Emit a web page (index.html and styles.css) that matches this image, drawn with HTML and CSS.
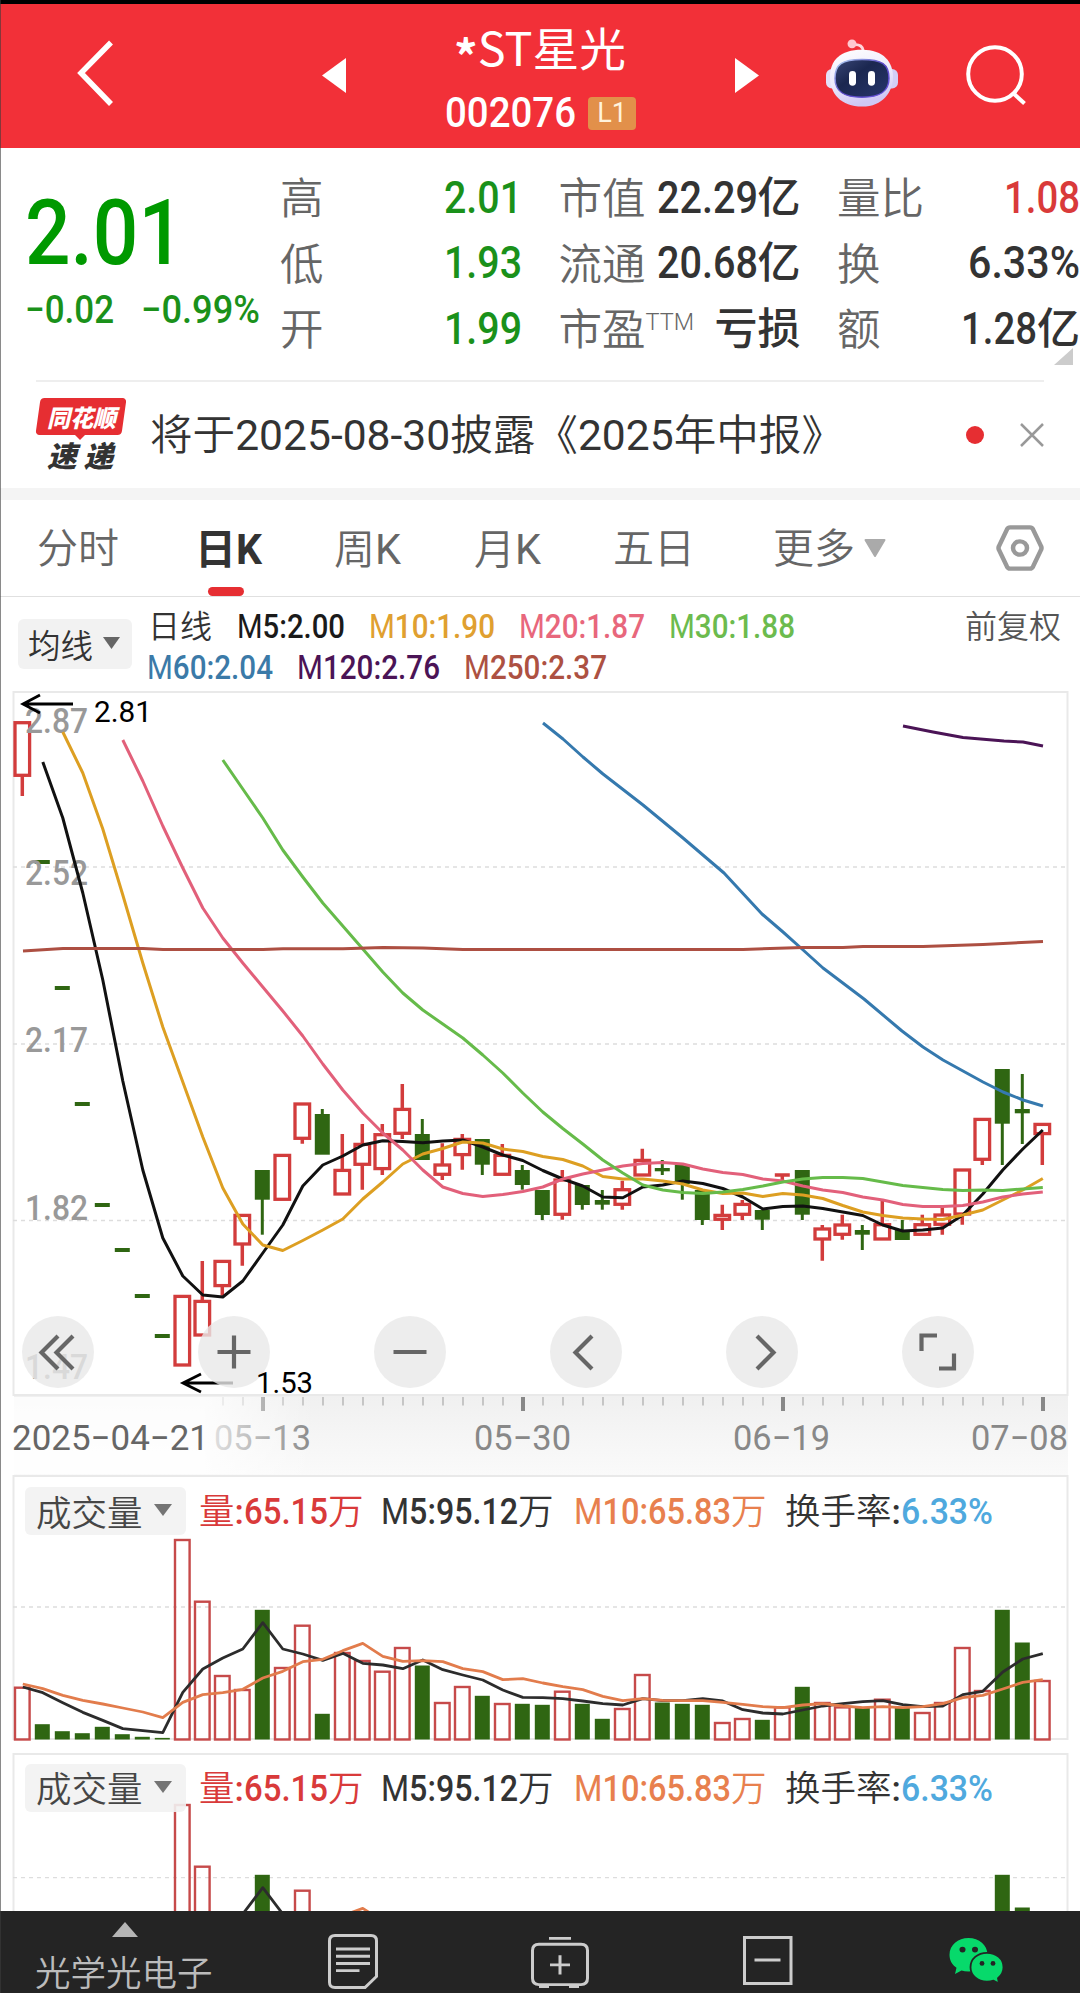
FILE: index.html
```html
<!DOCTYPE html>
<html lang="zh-CN">
<head>
<meta charset="utf-8">
<title>*ST星光 002076</title>
<link rel="stylesheet" href="styles.css">
</head>
<body>
<div class="app">
  <header class="topbar">
    <svg class="back" width="40" height="68" viewBox="0 0 40 68"><path d="M35 3.500 5 34 35 65" fill="none" stroke="#fff" stroke-width="5.500"/></svg>
    <svg class="prev" width="24" height="35" viewBox="0 0 24 35"><path d="M24 0v35L0 17.500z" fill="#fff"/></svg>
    <div class="title">
      <div class="name"><span class="fit" data-w="172"><span class="star">*</span>ST星光</span></div>
      <div class="code"><span class="fit" data-w="131">002076</span><span class="badge">L1</span></div>
    </div>
    <svg class="next" width="24" height="35" viewBox="0 0 24 35"><path d="M0 0v35l24-17.500z" fill="#fff"/></svg>
    <svg class="robot" width="74" height="68" viewBox="0 0 74 70" preserveAspectRatio="none">
      <defs>
        <linearGradient id="shell" x1="0" y1="0" x2=".3" y2="1"><stop offset="0" stop-color="#fff"/><stop offset=".6" stop-color="#ece9fb"/><stop offset="1" stop-color="#cfc8f5"/></linearGradient>
        <linearGradient id="visor" x1="0" y1="0" x2="1" y2="1"><stop offset="0" stop-color="#3a4776"/><stop offset=".4" stop-color="#1b2750"/><stop offset="1" stop-color="#27366c"/></linearGradient>
        <linearGradient id="rim" x1="0" y1="0" x2="1" y2="1"><stop offset="0" stop-color="#b9dcf6"/><stop offset=".5" stop-color="#5a49c8"/><stop offset="1" stop-color="#6b55dd"/></linearGradient>
      </defs>
      <path d="M28 6c7-1 10 2 10.500 7" fill="none" stroke="#ffd5dc" stroke-width="3"/>
      <circle cx="27" cy="5" r="4.500" fill="#ffc9d0"/>
      <rect x="1" y="31" width="14" height="20" rx="6" fill="#e4e0f8"/>
      <rect x="59" y="31" width="14" height="20" rx="6" fill="#d3cff6"/>
      <path d="M37 11c22 0 31 13 31 28S58 69.500 37 69.500 5 56 5 39s10-28 32-28z" fill="url(#shell)"/>
      <path d="M37 21c20 0 27 5 27 19.500S54 60 37 60 10 55 10 40.500 17 21 37 21z" fill="url(#visor)" stroke="url(#rim)" stroke-width="1.500"/>
      <rect x="24" y="33" width="7" height="15" rx="3.500" fill="#fff"/>
      <rect x="43" y="33" width="7" height="15" rx="3.500" fill="#fff"/>
    </svg>
    <svg class="search" width="62" height="62" viewBox="0 0 62 62"><circle cx="29" cy="30" r="26.800" fill="none" stroke="#fff" stroke-width="4"/><path d="m47 49 11.500 10.500" stroke="#fff" stroke-width="4"/></svg>
  </header>

  <section class="quote">
    <div class="last">
      <div class="price"><span class="fit" data-w="159">2.01</span></div>
      <div class="change"><span class="fit" data-w="89">−0.02</span><span class="fit" data-w="119">−0.99%</span></div>
    </div>
    <dl class="stats">
      <div><dt>高</dt><dd class="down"><span class="fit" data-w="78">2.01</span></dd></div>
      <div><dt>市值</dt><dd><span class="fit" data-w="101">22.29</span>亿</dd></div>
      <div><dt>量比</dt><dd class="up"><span class="fit" data-w="76">1.08</span></dd></div>
      <div><dt>低</dt><dd class="down"><span class="fit" data-w="78">1.93</span></dd></div>
      <div><dt>流通</dt><dd><span class="fit" data-w="101">20.68</span>亿</dd></div>
      <div><dt>换</dt><dd><span class="fit" data-w="112">6.33%</span></dd></div>
      <div><dt>开</dt><dd class="down"><span class="fit" data-w="78">1.99</span></dd></div>
      <div><dt>市盈<sup>TTM</sup></dt><dd>亏损</dd></div>
      <div><dt>额</dt><dd><span class="fit" data-w="76">1.28</span>亿</dd></div>
    </dl>
    <svg class="corner" width="19" height="17" viewBox="0 0 19 17"><path d="M19 0v17H0z" fill="#ccc"/></svg>
  </section>

  <section class="news">
    <div class="brand">
      <div class="bubble"><span class="fit" data-w="69">同花顺</span></div>
      <div class="express"><span class="fit" data-w="66">速 递</span></div>
    </div>
    <p><span class="fit" data-w="694">将于<em>2025-08-30</em>披露《<em>2025</em>年中报》</span></p>
    <i class="dot"></i>
    <svg class="close" width="24" height="24" viewBox="0 0 24 24"><path d="m1 1 22 22M23 1l-22 22" stroke="#999" stroke-width="2.500"/></svg>
  </section>

  <nav class="tabs">
    <span class="t1">分时</span>
    <span class="t2 active">日<b class="fit" data-w="26">K</b></span>
    <span class="t3">周<span class="fit" data-w="26">K</span></span>
    <span class="t4">月<span class="fit" data-w="26">K</span></span>
    <span class="t5">五日</span>
    <span class="t6">更多</span>
    <svg class="more" width="22" height="19" viewBox="0 0 22 19"><path d="M1.500 1h19L11 17z" fill="#aaa" stroke="#aaa" stroke-linejoin="round" stroke-width="2"/></svg>
    <svg class="gear" width="48" height="46" viewBox="0 0 48 48" preserveAspectRatio="none"><path d="M14 2.500h20q2 0 3 2L45 22q1 2 0 4L37 43.500q-1 2-3 2H14q-2 0-3-2L3 26q-1-2 0-4L11 4.500q1-2 3-2z" fill="none" stroke="#999" stroke-width="4.500"/><circle cx="24" cy="24" r="7" fill="none" stroke="#999" stroke-width="4.500"/></svg>
  </nav>

  <section class="averages">
    <button class="pill">均线<svg width="17" height="12" viewBox="0 0 17 12"><path d="M0 0h17L8.500 12z" fill="#666"/></svg></button>
    <div class="legend">
      <div class="line">
        <span class="cycle">日线</span>
        <span class="fit m5" data-w="108"><em>M</em>5:2.00</span>
        <span class="fit m10" data-w="126"><em>M</em>10:1.90</span>
        <span class="fit m20" data-w="126"><em>M</em>20:1.87</span>
        <span class="fit m30" data-w="126"><em>M</em>30:1.88</span>
      </div>
      <div class="line">
        <span class="fit m60" data-w="126"><em>M</em>60:2.04</span>
        <span class="fit m120" data-w="143"><em>M</em>120:2.76</span>
        <span class="fit m250" data-w="143"><em>M</em>250:2.37</span>
      </div>
    </div>
    <span class="adjust">前复权</span>
  </section>

  <section class="candles">
    <svg id="price" width="1080" height="784" viewBox="0 691 1080 784"></svg>
    <div class="tools">
      <button><svg viewBox="0 0 72 72"><path d="M36 20 19.500 36.500 36 53M51 20 34.500 36.500 51 53"/></svg></button>
      <button><svg viewBox="0 0 72 72"><path d="M36 19.500v33M19.500 36h33"/></svg></button>
      <button><svg viewBox="0 0 72 72"><path d="M19.500 36h33"/></svg></button>
      <button><svg viewBox="0 0 72 72"><path d="M42 20 25.500 36.500 42 53"/></svg></button>
      <button><svg viewBox="0 0 72 72"><path d="m31 20 16.500 16.500L31 53"/></svg></button>
      <button><svg viewBox="0 0 72 72"><path d="M19.500 35V19.500h15.500M52 37.500v15H37"/></svg></button>
    </div>
  </section>

  <section class="volume">
    <svg class="plot" width="1080" height="278" viewBox="0 1475 1080 278"></svg>
    <div class="caption">
      <button class="pill">成交量<svg width="18" height="12" viewBox="0 0 18 12"><path d="M0 0h18L9 12z" fill="#666"/></svg></button>
      <span class="v0">量<b>:</b><span class="fit" data-w="84">65.15</span>万</span>
      <span class="v5"><span class="fit" data-w="137"><em>M</em>5:95.12</span>万</span>
      <span class="v10"><span class="fit" data-w="157"><em>M</em>10:65.83</span>万</span>
      <span class="vt">换手率<b>:</b><span class="fit rate" data-w="92">6.33%</span></span>
    </div>
  </section>

  <section class="volume second">
    <svg class="plot" width="1080" height="158" viewBox="0 1753 1080 158"></svg>
    <div class="caption">
      <button class="pill">成交量<svg width="18" height="12" viewBox="0 0 18 12"><path d="M0 0h18L9 12z" fill="#666"/></svg></button>
      <span class="v0">量<b>:</b><span class="fit" data-w="84">65.15</span>万</span>
      <span class="v5"><span class="fit" data-w="137"><em>M</em>5:95.12</span>万</span>
      <span class="v10"><span class="fit" data-w="157"><em>M</em>10:65.83</span>万</span>
      <span class="vt">换手率<b>:</b><span class="fit rate" data-w="92">6.33%</span></span>
    </div>
  </section>

  <footer class="dock">
    <div class="sector">
      <svg width="26" height="15" viewBox="0 0 26 15"><path d="M13 0l13 15H0z" fill="#b5b5b5"/></svg>
      <span>光学光电子</span>
    </div>
    <svg class="doc" width="50" height="55" viewBox="0 0 50 57" preserveAspectRatio="none" fill="none" stroke="#ccc" stroke-width="3"><path d="M7 1.500h36q5.500 0 5.500 5.500v37L37 55.500H7q-5.500 0-5.500-5.500V7Q1.500 1.500 7 1.500z"/><path d="M8 15.500h34M8 23h34M8 30.500h34M8 38h23.500"/></svg>
    <svg class="case" width="58" height="52" viewBox="0 0 58 54" preserveAspectRatio="none" fill="none" stroke="#ccc" stroke-width="3"><path d="M18 2.500h22M8 8.500h42q6.500 0 6.500 6.500v29q0 6.500-6.500 6.500H8q-6.500 0-6.500-6.500V15q0-6.500 6.500-6.500zM29 20v20M19 30h20M8 52.500h10M38 52.500h10"/></svg>
    <svg class="minus" width="50" height="49" viewBox="0 0 50 49" fill="none" stroke="#ccc" stroke-width="3"><path d="M1.500 1.500h46.500v46H1.500zM11.500 24h26"/></svg>
    <svg class="wechat" width="55" height="46" viewBox="0 0 55 48" preserveAspectRatio="none">
      <path d="M19.500 0C30 0 38.500 7.500 38.500 17.500S30 35 19.500 35q-4 0-7-1L6 37.500l1.500-6.500C3 28 .5 23.500.5 17.500.500 7.500 9 0 19.500 0z" fill="#07d96b"/>
      <path d="M38 15.500c9.500 0 16.500 6.500 16.500 15 0 5-2 8.500-5.500 11.500l1 5.500-5.500-3q-3 1-6.500 1c-9.500 0-16.500-6.500-16.500-15s7-15 16.500-15z" fill="#07d96b" stroke="#242424" stroke-width="1.800"/>
      <circle cx="13.500" cy="12" r="3"/><circle cx="26" cy="12" r="3"/><circle cx="33" cy="26.500" r="2.400"/><circle cx="44" cy="26.500" r="2.400"/>
    </svg>
  </footer>
</div>
<script src="chart.js"></script>
</body>
</html>
```
FILE: styles.css
```css
* { box-sizing: border-box; }
body {
  margin: 0;
  background: #fff;
  color: #333;
  font-family: Roboto, "Noto Sans CJK SC", sans-serif;
}
button { border: 0; padding: 0; margin: 0; font: inherit; color: inherit; }
em { font-style: normal; font-weight: 400; }
svg { display: block; flex: none; }
.fit { display: inline-block; white-space: nowrap; transform-origin: 0 50%; }
.app {
  position: relative;
  width: 1080px;
  height: 1993px;
  overflow: hidden;
}
.app::before {
  content: "";
  position: absolute;
  z-index: 5;
  inset: 0 auto 0 0;
  width: 1px;
  background: rgba(60, 60, 60, .6);
}

/* header */
.topbar {
  display: flex;
  align-items: flex-start;
  height: 148px;
  border-top: 4px solid #000;
  background: #f23038;
  color: #fff;
}
.back { margin: 35px 0 0 76px; }
.prev { margin: 54px 0 0 206px; }
.title { margin-left: 99px; width: 195px; }
.name {
  height: 84px;
  margin-left: 9px;
  font: 400 46px/84px "Noto Sans CJK SC", sans-serif;
}
.star { font-weight: 700; line-height: 0; vertical-align: -8px; }
.code {
  display: flex;
  align-items: center;
  gap: 12px;
  height: 54px;
  margin-top: -2px;
  font-size: 42.500px;
  font-weight: 500;
  line-height: 54px;
}
.badge {
  width: 48px;
  height: 33px;
  border-radius: 4px;
  background: #e2904a;
  color: #fff3dc;
  font-size: 27px;
  font-weight: 400;
  line-height: 33px;
  text-align: center;
}
.next { margin: 54px 0 0 95px; }
.robot { margin: 35px 0 0 66px; }
.search { margin: 40px 0 0 67px; }

/* quote */
.quote {
  position: relative;
  display: flex;
  height: 232px;
}
.last { width: 281px; padding-left: 25px; color: #090; }
.price {
  height: 110px;
  margin-top: 31px;
  font-size: 90px;
  font-weight: 500;
  line-height: 110px;
}
.change {
  display: flex;
  gap: 27px;
  height: 48px;
  margin-top: -3px;
  color: #1a911a;
  font-size: 38.500px;
  font-weight: 500;
  line-height: 48px;
}
.stats {
  display: grid;
  grid-template-columns: 242px 242px 243px;
  grid-template-rows: repeat(3, 65.500px);
  column-gap: 36.500px;
  margin: 15px 0 0 -1px;
  line-height: 65.500px;
}
.stats div { display: flex; justify-content: space-between; white-space: nowrap; }
.stats dt {
  color: #666;
  font-family: "Noto Sans CJK SC", sans-serif;
  font-size: 43.500px;
  font-weight: 350;
}
.stats dd {
  display: flex;
  margin: 2.500px 0 0;
  font-size: 43px;
  font-weight: 500;
}
.stats dd .fit { font-size: 43.500px; }
.stats .down { color: #1a911a; }
.stats .up { color: #d93a3a; }
.stats sup {
  font-family: Roboto, sans-serif;
  font-size: 23.500px;
  line-height: 0;
  vertical-align: 15px;
}
.corner { position: absolute; right: 7px; top: 200px; }

/* news */
.news {
  display: flex;
  align-items: center;
  height: 108px;
  margin: 0 36px;
  border-top: 2px solid #eee;
}
.brand { width: 90px; margin-top: -2px; font-family: "Noto Sans CJK SC", sans-serif; font-weight: 900; }
.bubble {
  position: relative;
  height: 37px;
  color: #fff;
  font-size: 24px;
  line-height: 37px;
  text-align: center;
}
.bubble::before {
  content: "";
  position: absolute;
  inset: 0 2px;
  border-radius: 4px;
  background: #e62e32;
  transform: skewX(-8deg);
}
.bubble::after {
  content: "";
  position: absolute;
  left: 38px;
  top: 36px;
  border: 6px solid transparent;
  border-top-color: #e62e32;
  border-bottom: 0;
}
.bubble .fit { position: relative; font-style: italic; }
.express {
  height: 36px;
  padding-left: 11px;
  font-size: 29px;
  font-style: italic;
  line-height: 38px;
}
.news p { margin: 1px 0 0 24px; font-size: 42px; line-height: 60px; font-weight: 350; }
.dot { width: 18px; height: 18px; margin-left: auto; border-radius: 50%; background: #e62e32; }
.close { margin-left: 36px; }

/* tabs */
.tabs {
  display: flex;
  height: 109px;
  border-top: 12px solid #f4f4f4;
  border-bottom: 1px solid #e0e0e0;
  color: #666;
  font-size: 41px;
  font-weight: 350;
  line-height: 99px;
  white-space: nowrap;
}
.tabs .fit { font-size: 42px; font-weight: 400; }
.t1 { width: 158px; margin-left: 37px; }
.t2 { position: relative; width: 139px; }
.t3 { width: 140px; }
.t4 { width: 139px; }
.t5 { width: 160px; }
.t6 { width: 91px; }
.tabs .active, .tabs .active .fit { color: #333; font-weight: 700; }
.active::after {
  content: "";
  position: absolute;
  left: 13px;
  bottom: 0;
  width: 36px;
  height: 9px;
  border-radius: 5px;
  background: #e62e32;
}
.more { margin-top: 39px; }
.gear { margin: 25px 0 0 110px; }

/* moving averages */
.averages { display: flex; height: 94px; }
.pill {
  display: flex;
  align-items: center;
  border-radius: 6px;
  background: #f2f2f2;
  font-family: "Noto Sans CJK SC", sans-serif;
  font-weight: 350;
}
.averages .pill {
  width: 114px;
  height: 50px;
  margin: 22px 0 0 18px;
  padding: 0 0 2px 10px;
  gap: 10px;
  font-size: 32.500px;
}
.legend { margin: 9px 0 0 16px; font-size: 33px; font-weight: 500; line-height: 41px; }
.legend .line { display: flex; gap: 24px; height: 41px; }
.legend .line + .line { margin-left: -1px; }
.legend .cycle { width: 65px; font-size: 32px; font-weight: 350; line-height: 43px; }
.m5 { color: #1a1a1a; }
.m10 { color: #e0a030; }
.m20 { color: #e8677c; }
.m30 { color: #6cbb4e; }
.m60 { color: #3b7aa8; }
.m120 { color: #4b1456; }
.m250 { color: #ad5142; }
.adjust { margin: 9px 0 0 auto; padding-right: 19px; color: #555; font-size: 32px; font-weight: 350; line-height: 43px; }

/* charts */
.candles, .volume { display: grid; }
.candles > *, .volume > * { grid-area: 1 / 1; }
.candles { height: 784px; }
.tools { display: flex; gap: 104px; margin: 625px 0 0 21.500px; height: 72px; z-index: 1; }
.tools button { width: 72px; height: 72px; border-radius: 50%; background: rgba(232, 232, 232, .8); }
.tools path { fill: none; stroke: #666; stroke-width: 4.200; }
text { font-family: Roboto, sans-serif; }
.axis { fill: #999; font-size: 34.500px; font-weight: 500; }
.mark { fill: #000; font-size: 30px; }
.date { fill: #888; font-size: 35px; font-weight: 450; }
.date.first { fill: #666; }
.volume { height: 278px; }
.second { height: 158px; }
.caption {
  display: grid;
  grid-template-columns: 174px 182px 193px 211px auto;
  height: 75px;
  padding-left: 25px;
  font-size: 35.500px;
  font-weight: 350;
  line-height: 73px;
  white-space: nowrap;
}
.caption b { font-weight: 500; }
.caption .pill { width: 161px; height: 48px; margin-top: 12px; padding: 0 0 2px 11px; gap: 11px; font-size: 35.500px; opacity: .9; }
.caption .pill svg { margin-top: 0; }
.second .pill { margin-top: 11px; }
.second .caption { line-height: 72px; }
.caption .fit { font-size: 36.500px; font-weight: 500; }
.v0 { color: #d93a3a; }
.v10 { color: #e8804e; }
.rate { color: #4fa9de; }

/* dock */
.dock { display: flex; height: 82px; background: #242424; }
.dock circle { fill: #242424; }
.sector { width: 328px; padding-left: 35px; color: #bbb; font-size: 35.500px; font-weight: 350; }
.sector svg { margin: 11px 0 0 77px; }
.sector span { display: block; margin-top: 16px; line-height: 42px; }
.doc { margin-top: 23px; }
.case { margin: 25px 0 0 153px; }
.minus { margin: 25px 0 0 154px; }
.wechat { margin: 27px 0 0 156px; }
```
FILE: chart.js
```js
// Condense each figure to the width of its slot.
document.querySelectorAll('.fit').forEach(el => {
  const target = +el.dataset.w, natural = el.getBoundingClientRect().width;
  el.style.width = target + 'px';
  el.style.transform = 'scaleX(' + target / natural + ')';
});

const RED = '#d23c3c', GREEN = '#2f6612', X0 = 22.3, STEP = 20;
const cx = i => X0 + i * STEP;
const poly = (pts, color, w = 3) =>
  `<polyline points="${pts.join(' ')}" fill="none" stroke="${color}" stroke-width="${w}" stroke-linejoin="round"/>`;
const series = (first, ys) => ys.map((y, k) => `${cx(first + k) + .5},${y}`);

// r/g, high, body top, body bottom, low
const candles = [
['r',722,721,777,796],['g',860,860,864,864],['g',986,986,990,990],['g',1102,1102,1106,1106],['g',1203,1203,1207,1207],['g',1248,1248,1252,1252],['g',1294,1294,1298,1298],['g',1334,1334,1338,1338],
['r',1295,1294.7,1366.7,1366],['r',1261,1299.7,1336.7,1336],['r',1260,1259.7,1287.3,1295.7],['r',1214,1213.7,1245.7,1265.7],['g',1170,1170,1199.7,1234.7],['r',1154,1153.7,1201,1200],['r',1103,1102.3,1140,1143.7],['g',1109,1114,1154.7,1154],
['r',1134,1168.7,1195.7,1195],['r',1124,1142.7,1166,1189.7],['r',1124,1133,1170.3,1175],['r',1084,1107.7,1135,1139],['g',1119,1134,1160,1160],['r',1143.3,1163.3,1176,1180],['r',1134,1137.7,1156.3,1169.7],['g',1139,1139,1164.7,1175],
['r',1144,1153.7,1176,1175],['g',1165,1170,1185,1189.7],['g',1190,1190,1215,1220],['r',1170,1178.3,1216,1219.7],['g',1185,1185,1205,1209.7],['g',1190,1200,1204.7,1209.7],['r',1180.7,1188,1206,1209.7],['r',1148.7,1158.7,1176.7,1176],
['g',1160,1168,1171.3,1175],['g',1165,1164.7,1184,1199.7],['g',1190,1190,1220,1225],['r',1204.7,1213.7,1221,1230],['r',1200,1202.7,1216,1220],['g',1210,1210,1219.7,1230],['r',1173,1173,1177,1180],['g',1170,1170,1214.7,1220],
['r',1225,1227.3,1240.7,1260.7],['r',1214.7,1223.3,1236,1239.7],['g',1225,1230,1234.7,1250],['r',1200,1223,1240.7,1240],['g',1220,1230,1240,1240],['r',1214.7,1223,1236,1235],['r',1205,1213.3,1226,1234.7],['r',1169,1168.3,1215.7,1224.7],
['r',1118,1117.7,1161,1165],['g',1069,1069,1123.7,1165],['g',1074,1109,1113.3,1144],['r',1123,1122.7,1135.3,1165]];

let s = `<defs>
<linearGradient id="shade" x1="0" y1="0" x2="0" y2="1"><stop offset="0" stop-color="#f0f0f0"/><stop offset="1" stop-color="#fafafa"/></linearGradient>
<linearGradient id="fade"><stop offset="0" stop-color="#fff" stop-opacity=".8"/><stop offset="1" stop-color="#fff" stop-opacity="0"/></linearGradient></defs>
<rect x="14" y="1396" width="1054" height="79" fill="url(#shade)"/>
<rect x="13.500" y="692" width="1054" height="703" fill="#fff" stroke="#e9e9e9" stroke-width="2"/>`;
for (const y of [867, 1044, 1220.5])
  s += `<path d="M13 ${y}H1067" stroke="#ddd" stroke-width="1.300" stroke-dasharray="4 4"/>`;
candles.forEach(([c, hi, top, bot, lo], i) => {
  const x = cx(i);
  if (c === 'g') {
    s += `<path d="M${x} ${hi}V${lo}" stroke="${GREEN}" stroke-width="3"/><rect x="${x - 7.5}" y="${top}" width="15" height="${bot - top}" fill="${GREEN}"/>`;
  } else if (bot - top < 5) {
    s += `<path d="M${x - 7.5} 1175h15M${x} 1175V${lo}" stroke="${RED}" stroke-width="3.500"/>`;
  } else {
    s += `<path d="M${x} ${hi}V${top + 1}M${x} ${bot - 1}V${lo}" stroke="${RED}" stroke-width="3.500"/><rect x="${x - 7.3}" y="${top + 1.7}" width="14.600" height="${bot - top - 3.4}" fill="none" stroke="${RED}" stroke-width="3.300"/>`;
  }
});
[['2.87', 733], ['2.52', 885], ['2.17', 1052], ['1.82', 1219.5], ['1.47', 1379]].forEach(([t, y]) => {
  s += `<text class="axis" x="25" y="${y}" textLength="63" lengthAdjust="spacingAndGlyphs">${t}</text>`;
});
s += poly(series(1, [762,818,893,980,1081,1170,1238,1276,1295,1297,1281,1253,1225,1186,1165,1156,1145,1140.7,1141.5,1142.7,1141,1140,1147,1155,1160.5,1170.5,1179,1186,1197,1197.7,1187,1185,1181,1183.5,1188.5,1197,1209,1206.5,1206,1208.5,1212,1215.5,1225,1231,1230,1228,1215,1194,1170,1149,1130]), '#111');
s += poly(series(2, [732,773,829,895,963,1027,1082,1137,1188,1224,1245,1250.5,1240.5,1230,1219,1199,1182,1164,1154,1148.5,1142,1143,1149,1151.5,1156.5,1159.5,1166,1176.5,1179,1179,1181,1184,1190,1193.5,1193,1196.5,1193.5,1195,1198.5,1205.5,1212,1215.5,1218,1219,1219.5,1215,1210,1200,1190,1178.5]), '#dd9f22');
s += poly(series(5, [740,781,826,868,908,938,963,987,1011,1036,1064,1090,1113,1133,1150,1170,1187,1193.5,1196.5,1194.5,1191.5,1187,1179,1174,1170,1166,1163.5,1162.5,1164,1169,1172.5,1174.5,1179,1181,1186,1190,1192.5,1197,1200,1204.5,1206.5,1206.5,1205.5,1202,1197,1194,1192]), '#e2607a');
s += poly(series(10, [760,789,818,850,877,903,926,949,972,993,1010,1024,1038,1055,1073,1093,1112,1128.5,1144,1160,1173,1185,1190,1192.5,1193.5,1192,1189.5,1186,1182,1179,1177.5,1177.5,1178.5,1182,1185.5,1187.5,1189.5,1190.5,1190,1190.5,1189,1187.5]), '#66bb4a');
s += poly(['543,723', '563,739', '583,757', '603,774', '643,805', '683,838', '724,873', '762,914', '783,932', '802,949', '823,968', '864,999', '902,1031', '923,1047', '943,1060', '963,1071', '983,1082', '1003,1092', '1023,1100', '1043,1106'], '#3579ae');
s += poly(['903,726', '933,732', '963,737.500', '1004,741', '1023,742', '1043,746'], '#4b1456');
s += poly(['23,951', '63,948.500', '143,948.500', '163,949.500', '263,949.500', '283,948.700', '343,948.700', '383,947.500', '423,948', '463,949.500', '743,949.500', '803,947.500', '843,947.500', '863,946.500', '923,946.500', '983,944.500', '1043,941.500'], '#ad4f42');
s += `<path d="M73 704H23M40 695 23 704l17 9M233 1383H183M201 1374l-18 9 18 9" fill="none" stroke="#000" stroke-width="2.800"/>`;
s += `<text class="mark" x="94" y="722" textLength="58" lengthAdjust="spacingAndGlyphs">2.81</text>`;
for (let i = 10; i < 52; i++) {
  const major = (i - 12) % 13 === 0;
  s += `<path d="M${cx(i) + .7} 1397v${major ? 14 : 8.5}" stroke="${major ? '#888' : '#bbb'}" stroke-width="${major ? 4 : 1.6}"/>`;
}
[['05−13', 214], ['05−30', 474], ['06−19', 733], ['07−08', 971]].forEach(([t, x]) => {
  s += `<text class="date" x="${x}" y="1450" textLength="97" lengthAdjust="spacingAndGlyphs">${t}</text>`;
});
s += `<rect x="2" y="1397" width="203" height="77" fill="#fff" opacity=".8"/><rect x="205" y="1397" width="110" height="77" fill="url(#fade)"/>
<text class="date first" x="12" y="1450" textLength="197" lengthAdjust="spacingAndGlyphs">2025−04−21</text>`;
document.getElementById('price').innerHTML = s;

// The low mark is painted above the round controls.
const low = document.createElementNS('http://www.w3.org/2000/svg', 'svg');
low.setAttribute('viewBox', '0 691 1080 784');
low.setAttribute('width', 1080);
low.setAttribute('height', 784);
low.style.zIndex = 2;
low.innerHTML = '<text class="mark" x="256" y="1393" textLength="57" lengthAdjust="spacingAndGlyphs">1.53</text>';
document.querySelector('.candles').append(low);

// Volume bars: colour letter and height in pixels
const vol = 'r52.3 g15.3 g8.3 g6.3 g12.7 g5.3 g2.7 g1.6 r200 r138.3 r64 r50 g129.7 r72 r114.300 g25.7 r87 r79 r68.300 r92 g74 r37 r53 g43.7 r36 g35.7 g34.7 r48.300 g35.7 g20.7 r31 r65 g37 g35.7 g34.7 r17 r21 g19.7 r32.600 g52.7 r37 r32.600 g31.700 r40.300 g31.700 r27 r37 r92 r49 g129.7 g97 r59'.split(' ');
// Averages as depth below the top of the scale, in thirds of a pixel
const v5 = [681,698,728,757,781,806,812,818,697,627,594,567,488,567,582,601,580,610,615,626,600,629,645,660,690,712,713,716,723,731,735,716,722,722,716,723,749,759,762,750,738,731,725,722,734,740,738,704,694,636,597,581];
const v10 = [672,686,706,721,732,744,756,773,727,704,698,688,654,634,605,598,572,550,589,604,602,605,626,635,659,656,669,680,689,709,722,716,721,722,722,727,733,740,743,735,731,738,743,740,743,740,731,713,706,687,667,659];
function drawVolume(svg, top, height, grid, bottom) {
  let v = `<rect x="13.500" y="${top + 1}" width="1054" height="${height}" fill="#fff" stroke="#e9e9e9" stroke-width="2"/><path d="M13 ${grid}H1067" stroke="#ddd" stroke-width="1.300" stroke-dasharray="4 4"/>`;
  vol.forEach((d, i) => {
    const h = parseFloat(d.slice(1)), x = cx(i);
    v += d[0] === 'g'
      ? `<rect x="${x - 7.5}" y="${bottom - h}" width="15" height="${h}" fill="${GREEN}"/>`
      : `<rect x="${x - 7.3}" y="${bottom - h + .5}" width="14.600" height="${h - .5}" fill="none" stroke="#c64a4a" stroke-width="2.400"/>`;
  });
  const line = a => series(0, a.map(n => bottom - 279.5 + n / 3));
  v += poly(line(v5), '#2c2c2c', 2.8) + poly(line(v10), '#e27c4c', 2.8);
  svg.innerHTML = v;
}
const plots = document.querySelectorAll('.plot');
drawVolume(plots[0], 1475, 263, 1607, 1739.5);
drawVolume(plots[1], 1753, 263, 1877.7, 2004.5);
```
